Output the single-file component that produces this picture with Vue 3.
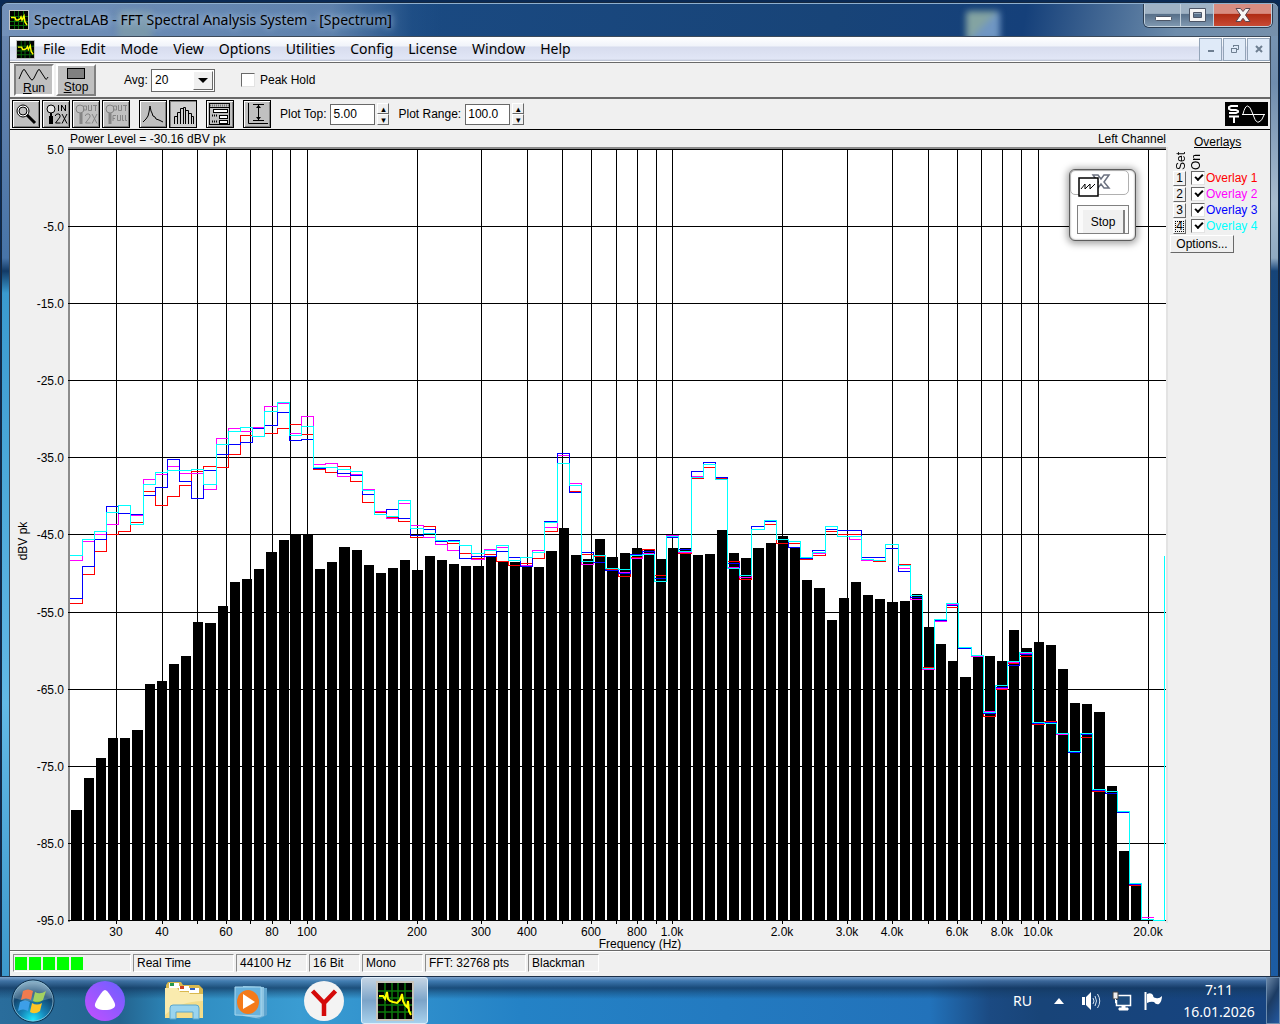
<script setup>
import { ref } from 'vue'

const menus = ['File', 'Edit', 'Mode', 'View', 'Options', 'Utilities', 'Config', 'License', 'Window', 'Help']
const avg = ref('20')
const peakHold = ref(false)
const plotTop = ref('5.00')
const plotRange = ref('100.0')

const levels = [
  810, 778, 758, 738, 738, 730, 684, 681, 664, 656, 622, 623, 606, 582, 579, 569, 552, 540, 534, 534,
  569, 562, 547, 550, 565, 573, 568, 560, 570, 556, 560, 564, 566, 566, 556, 562, 562, 566, 567, 551,
  528, 555, 559, 539, 557, 553, 548, 550, 559, 548, 548, 555, 554, 530, 553, 558, 548, 543, 536, 547,
  580, 588, 620, 598, 582, 595, 599, 602, 601, 594, 627, 644, 661, 677, 656, 656, 661, 630, 648, 642,
  645, 669, 703, 704, 712, 786, 851, 884
]

const overlays = ref([
  {
    name: 'Overlay 1', color: '#ff0000', on: true,
    rows: [603, 574, 551, 534, 531, 522, 491, 505, 496, 485, 471, 466, 467, 454, 435, 428, 433, 428, 424, 434,
      469, 472, 466, 481, 502, 512, 517, 521, 537, 526, 541, 543, 553, 558, 554, 561, 565, 563, 558, 531,
      455, 491, 554, 556, 569, 576, 557, 549, 575, 537, 553, 478, 467, 478, 561, 579, 529, 524, 543, 543,
      559, 555, 531, 534, 534, 560, 561, 544, 564, 595, 667, 619, 607, 647, 655, 716, 689, 663, 656, 724,
      721, 733, 751, 737, 791, 791, 811, 885, 919]
  },
  {
    name: 'Overlay 2', color: '#ff00ff', on: true,
    rows: [560, 541, 534, 524, 505, 515, 479, 474, 466, 473, 473, 489, 438, 428, 431, 427, 406, 403, 433, 416,
      464, 463, 476, 474, 489, 511, 518, 503, 525, 537, 544, 550, 545, 559, 549, 547, 560, 565, 550, 527,
      455, 483, 564, 555, 568, 572, 558, 553, 581, 535, 552, 476, 464, 479, 567, 577, 529, 521, 539, 541,
      558, 553, 529, 536, 539, 560, 560, 544, 568, 599, 669, 621, 604, 647, 656, 711, 688, 662, 653, 723,
      723, 734, 751, 733, 789, 791, 811, 883, 917]
  },
  {
    name: 'Overlay 3', color: '#0000ff', on: true,
    rows: [598, 566, 539, 506, 513, 514, 495, 487, 459, 481, 498, 470, 454, 444, 442, 428, 425, 412, 440, 439,
      468, 467, 473, 475, 494, 514, 509, 518, 535, 529, 541, 540, 558, 556, 556, 551, 557, 566, 552, 521,
      453, 492, 552, 562, 570, 573, 554, 551, 578, 537, 549, 471, 462, 477, 563, 575, 526, 521, 539, 547,
      558, 550, 529, 530, 530, 557, 557, 548, 571, 597, 668, 620, 605, 648, 655, 713, 687, 665, 654, 723,
      722, 733, 752, 734, 790, 793, 812, 884, 919]
  },
  {
    name: 'Overlay 4', color: '#00ffff', on: true,
    rows: [555, 539, 531, 512, 505, 524, 484, 472, 470, 470, 469, 484, 444, 431, 427, 436, 411, 402, 435, 426,
      467, 467, 469, 471, 490, 514, 516, 500, 528, 533, 540, 541, 545, 553, 550, 545, 560, 557, 552, 522,
      463, 485, 561, 555, 568, 569, 555, 554, 581, 536, 551, 477, 464, 479, 568, 575, 529, 520, 539, 541,
      557, 552, 526, 536, 536, 559, 560, 544, 565, 595, 668, 619, 603, 647, 655, 712, 685, 661, 652, 722,
      723, 733, 751, 733, 789, 791, 811, 883, 919]
  }
])

const bandLeft = (i) => Math.ceil(71 + 12.178 * i)
const bars = levels.map((y, i) => ({ x: bandLeft(i), w: bandLeft(i + 1) - 2 - bandLeft(i), y, h: 920 - y }))

function stepPath(o, n) {
  let d = `M70 ${o.rows[0] + 0.5}`
  o.rows.forEach((y, i) => {
    if (i) d += `V${y + 0.5}`
    d += `H${bandLeft(i + 1) - 1.5}`
  })
  if (n === 3) d += 'V920.5H1164.5V556'
  return d
}

const rowsDb = [149, 226, 303, 380, 457, 534, 612, 689, 766, 843, 920].map((y, i) => ({ y, label: (5 - 10 * i).toFixed(1) }))
const columns = [
  [116, '30'], [162, '40'], [197], [226, '60'], [250], [272, '80'], [290], [307, '100'], [417, '200'], [481, '300'],
  [527, '400'], [562], [591, '600'], [616], [637, '800'], [656], [672, '1.0k'], [782, '2.0k'], [847, '3.0k'],
  [892, '4.0k'], [928], [957, '6.0k'], [981], [1002, '8.0k'], [1021], [1038, '10.0k'], [1148, '20.0k']
]
const panes = [
  ['Real Time', 'w100'], ['44100 Hz', 'w70'], ['16 Bit', 'w50'], ['Mono', 'w60'], ['FFT: 32768 pts', 'w100'], ['Blackman', 'w70']
]
</script>

<template>
  <div class="desktop">
    <main class="window">
      <header class="titlebar">
        <svg class="appicon" viewBox="0 0 20 20">
          <rect width="20" height="20" fill="#c8c8c8" /><rect x="1" y="1" width="18" height="18" fill="#000" />
          <path d="M5.500 1V19M9.500 1V19M14.500 1V19M1 6.500H19M1 11.500H19M1 15.500H19" stroke="#0a6a0a" />
          <path d="M2 7.500H6L7 10H9L11 9L12 7L13 10L15 6L16 12L18 15" fill="none" stroke="#ff0" stroke-width="1.500" />
        </svg>
        <h1>SpectraLAB - FFT Spectral Analysis System - [Spectrum]</h1>
        <i class="smudge s1"></i><i class="smudge s2"></i>
        <div class="caption">
          <button class="cap-min" aria-label="Minimize"><svg width="20" height="14"><rect x="2.500" y="8.500" width="16" height="4" rx="1" fill="#fff" stroke="#4c5566" /></svg></button>
          <button class="cap-max" aria-label="Maximize"><svg width="20" height="14"><path d="M2.500 .5H18.500V13.500H2.500ZM6.500 4.500V9.500H14.500V4.500Z" fill="#f4f4f4" fill-rule="evenodd" stroke="#4c5566" /></svg></button>
          <button class="cap-close" aria-label="Close"><svg width="16" height="14" viewBox="0 0 16 14"><path d="M1 .5H5.500L8 3.500L10.500 .5H15L10.500 7L15 13.500H10.500L8 10.300L5.500 13.500H1L5.500 7Z" fill="#f6f6f6" stroke="#5a4650" /></svg></button>
        </div>
      </header>

      <div class="client">
        <nav class="menubar">
          <svg class="appicon small" viewBox="0 0 20 20">
            <rect width="20" height="20" fill="#c8c8c8" /><rect x="1" y="1" width="18" height="18" fill="#000" />
            <path d="M5.500 1V19M9.500 1V19M14.500 1V19M1 6.500H19M1 11.500H19M1 15.500H19" stroke="#0a6a0a" />
            <path d="M2 7.500H6L7 10H9L11 9L12 7L13 10L15 6L16 12L18 15" fill="none" stroke="#ff0" stroke-width="1.500" />
          </svg>
          <button v-for="m in menus" :key="m" class="menu">{{ m }}</button>
          <div class="mdi">
            <button aria-label="Minimize document"><svg width="10" height="10"><rect x="2" y="6" width="6" height="2" fill="#6e7f91" /></svg></button>
            <button aria-label="Restore document"><svg width="10" height="10"><path d="M3.500 3V1.500H8.500V5.500H7M1.500 4.500H6.500V8.500H1.500ZM3 1.500H9M1 4.500H7" fill="none" stroke="#6e7f91" /></svg></button>
            <button aria-label="Close document"><svg width="10" height="10"><path d="M2 2L8 8M8 2L2 8" stroke="#6e7f91" stroke-width="2" /></svg></button>
          </div>
        </nav>

        <div class="toolbar run-bar">
          <button class="big pressed">
            <svg width="32" height="14"><path d="M1 11L4 4Q6 -1 8 4L12 10Q14 14 16 10L19 4Q21 -1 23 4L27 10Q28 13 30 9" fill="none" stroke="#000" /></svg>
            <span><u>R</u>un</span>
          </button>
          <button class="big">
            <svg width="32" height="14"><rect x="7.500" y="1.500" width="17" height="10" fill="#808080" stroke="#000" /></svg>
            <span><u>S</u>top</span>
          </button>
          <label for="avg" class="avg-label">Avg:</label>
          <span class="combo">
            <select id="avg" v-model="avg"><option>20</option><option>10</option></select>
            <i class="drop"></i>
          </span>
          <label class="peak"><input v-model="peakHold" type="checkbox">Peak Hold</label>
        </div>

        <div class="toolbar tool-bar">
          <div class="group">
            <button class="tool" aria-label="Zoom"><svg viewBox="0 0 24 24"><circle cx="9" cy="9" r="6" fill="#fff" stroke="#000" /><circle cx="9" cy="9" r="4" fill="#c0c0c0" stroke="#000" /><path d="M13 13L21 21" stroke="#000" stroke-width="3" /></svg></button>
            <button class="tool" aria-label="Zoom in 2X"><svg viewBox="0 0 24 24"><circle cx="7" cy="7" r="4" fill="#e8e8e8" stroke="#000" /><path d="M7 11V14" stroke="#000" stroke-width="2" /><path d="M7 14V22" stroke="#000" stroke-width="4" /><path d="M14.500 3V9M17.500 9V3L21.500 9V3M11.500 14V13L13 12H15L16 13V15L11.500 21H16.500M18 12L23 21.500M23 12L18 21.500" fill="none" stroke="#000" /></svg></button>
            <button class="tool" aria-label="Zoom out 2X" disabled><svg viewBox="0 0 24 24"><circle cx="6" cy="7" r="4" fill="none" stroke="#858585" /><path d="M7 11V22" stroke="#858585" stroke-width="3" /><path d="M9.500 4V8H12.500V4ZM14.500 3V8.500H17.500V3M19 3.500H23M21.500 3V9M11.500 14V13L13 12H15L16 13V15L11.500 21H16.500M18 12L23 21.500M23 12L18 21.500" fill="none" stroke="#858585" /></svg></button>
            <button class="tool" aria-label="Zoom out full" disabled><svg viewBox="0 0 24 24"><circle cx="6" cy="7" r="4" fill="none" stroke="#858585" /><path d="M6 11V22" stroke="#858585" stroke-width="3" /><path d="M9.500 4V8H12.500V4ZM14.500 3V8.500H17.500V3M19 3.500H23M21.500 3V9M9 19V13.500H12M9 16.500H11M13.500 13V18.500H16.500V13M18.500 13V18.500H20M21.500 13V18.500H23" fill="none" stroke="#858585" /></svg></button>
          </div>
          <div class="group">
            <button class="tool" aria-label="Line plot"><svg viewBox="0 0 24 24"><path d="M2 20L4 18L5 17L7 14L8 10L9 4L10 9L11 11L12 14L14 15L15 17L18 18L22 20" fill="none" stroke="#000" /></svg></button>
            <button class="tool down" aria-label="Bar plot"><svg viewBox="0 0 24 24"><path d="M3.500 22V14.500H6.500V22V10.500H9.500V22V6.500H12.500V22V5.500H14.500V22V8.500H17.500V22V11.500H20.500V22V14.500H22.500V22" fill="none" stroke="#000" /></svg></button>
          </div>
          <div class="group">
            <button class="tool" aria-label="Display settings"><svg viewBox="0 0 24 24"><rect x="1.500" y="1.500" width="20" height="21" fill="#c0c0c0" stroke="#000" /><path d="M2 3.500H21" stroke="#777" stroke-width="2" stroke-dasharray="1 1" /><path d="M2 5.500H21" stroke="#000" /><rect x="5.500" y="7.500" width="14" height="3" fill="#fff" stroke="#000" /><rect x="11.500" y="13.500" width="8" height="3" fill="#fff" stroke="#000" /><rect x="11.500" y="18.500" width="8" height="3" fill="#fff" stroke="#000" /><path d="M4 13.500H9M4 19.500H9" stroke="#000" stroke-width="2" stroke-dasharray="1 1" /></svg></button>
          </div>
          <div class="group">
            <button class="tool" aria-label="Vertical range"><svg viewBox="0 0 24 24"><path d="M3.500 1V21.500H23M8 2.500H19M8 18.500H19M13.500 3V18" fill="none" stroke="#000" /><path d="M11 6L13.500 3L16 6ZM11 15L13.500 18L16 15Z" /></svg></button>
          </div>
          <label for="ptop">Plot Top:</label>
          <input id="ptop" v-model="plotTop" class="num" type="text">
          <span class="spin"><button aria-label="Raise top">▴</button><button aria-label="Lower top">▾</button></span>
          <label for="prange" class="range-label">Plot Range:</label>
          <input id="prange" v-model="plotRange" class="num" type="text">
          <span class="spin"><button aria-label="Raise range">▴</button><button aria-label="Lower range">▾</button></span>
          <svg class="logo" viewBox="0 0 43 24"><rect width="43" height="24" /><path d="M13 4H6L4 5V7L6 8H11L13 9V10L11 11H4M4 14.500H14M9 14V21" fill="none" stroke="#fff" stroke-width="2" /><path d="M17 12.500H40M18 12Q20 4 22.500 4T27 10L29 15Q31 21 34 20T39 13" fill="none" stroke="#fff" /></svg>
        </div>

        <section class="work">
          <div class="plotbox">
            <svg class="plot" viewBox="10 130 1160 820" role="img" aria-label="Spectrum">
              <rect x="69" y="148" width="1097" height="773" fill="#fff" />
              <g shape-rendering="crispEdges">
                <rect x="68" y="147" width="1098" height="2" fill="#8c8c8c" />
                <rect x="68" y="147" width="2" height="775" fill="#8c8c8c" />
                <rect x="1166" y="147" width="2" height="776" fill="#e3e3e3" />
                <rect v-for="r in rowsDb" :key="r.y" x="68" :y="r.y" width="1098" height="1" />
                <rect v-for="c in columns" :key="c[0]" :x="c[0]" y="149" width="1" height="775" />
                <rect v-for="b in bars" :key="b.x" :x="b.x" :y="b.y" :width="b.w" :height="b.h" />
                <template v-for="(o, n) in overlays" :key="o.name">
                  <path v-if="o.on" :d="stepPath(o, n)" fill="none" :stroke="o.color" />
                </template>
              </g>
              <text x="70" y="143">Power Level = -30.16 dBV pk</text>
              <text x="1166" y="143" text-anchor="end">Left Channel</text>
              <text v-for="r in rowsDb" :key="r.label" x="64" :y="r.y + 5" text-anchor="end">{{ r.label }}</text>
              <template v-for="c in columns" :key="c[0]">
                <text v-if="c[1]" :x="c[0]" y="936" text-anchor="middle">{{ c[1] }}</text>
              </template>
              <text x="640" y="948" text-anchor="middle">Frequency (Hz)</text>
              <text transform="translate(27 541) rotate(-90)" text-anchor="middle">dBV pk</text>
            </svg>
            <div class="popup">
              <div class="popup-head">
                <svg width="60" height="28" viewBox="0 0 60 28"><path d="M23 6H28L31 10L34 6H39L34 13L39 19H34L31 15L28 19H23L28 13Z" fill="#fff" stroke="#6c7280" stroke-width="1.500" /><rect x="9" y="9" width="19" height="18" fill="#fff" stroke="#000" stroke-width="1.500" /><path d="M11 20L15 15V20L20 15V20L25 15" fill="none" stroke="#000" /></svg>
              </div>
              <div class="popup-body"><button>Stop</button></div>
            </div>
          </div>

          <aside class="overlays">
            <h2>Overlays</h2>
            <div class="heads"><span>Set</span><span>On</span></div>
            <div v-for="(o, n) in overlays" :key="o.name" class="ov">
              <button class="set" :class="{ focus: n === 3 }">{{ n + 1 }}</button>
              <label :style="{ color: o.color }"><input v-model="o.on" type="checkbox">{{ o.name }}</label>
            </div>
            <button class="options">Options...</button>
          </aside>
        </section>

        <footer class="status">
          <div class="pane meter"><i v-for="n in 5" :key="n"></i></div>
          <div v-for="p in panes" :key="p[0]" class="pane" :class="p[1]">{{ p[0] }}</div>
        </footer>
      </div>
    </main>

    <div class="taskbar">
      <button class="orb" aria-label="Start">
        <svg width="44" height="44" viewBox="0 0 44 44">
          <defs>
            <radialGradient id="orb" cx=".5" cy=".95" r=".9"><stop offset="0" stop-color="#20e8ff" /><stop offset=".35" stop-color="#1684b8" /><stop offset=".7" stop-color="#12456e" /><stop offset="1" stop-color="#6e9cb8" /></radialGradient>
          </defs>
          <circle cx="22" cy="22" r="21" fill="url(#orb)" stroke="#0b2c48" /><circle cx="22" cy="22" r="20" fill="none" stroke="#9cc6dc" stroke-opacity=".7" />
          <path d="M12 12Q17 9 22 12L20 21Q15 18 10 21Z" fill="#ee5a24" /><path d="M24 13Q29 16 35 12L32 21Q27 25 22 22Z" fill="#8cc63a" />
          <path d="M9 23Q14 20 19 23L17 32Q12 29 7 32Z" fill="#3d9fe8" /><path d="M21 24Q26 27 31 24L29 32Q24 36 19 33Z" fill="#fdc526" />
          <path d="M3 19Q6 3 22 3T41 19Q22 26 3 19" fill="#fff" opacity=".2" />
        </svg>
      </button>
      <button class="task alice" aria-label="Alice">
        <svg width="40" height="40" viewBox="0 0 40 40"><defs><linearGradient id="al" x1="0" y1="1" x2="1" y2="0"><stop offset="0" stop-color="#c44fff" /><stop offset="1" stop-color="#6a60ff" /></linearGradient></defs><circle cx="20" cy="20" r="20" fill="url(#al)" /><path d="M20 9C23 9 29 20 30 23C31 27 26 29 20 29S9 27 10 23C11 20 17 9 20 9Z" fill="#fff" /></svg>
      </button>
      <button class="task explorer" aria-label="Explorer">
        <svg width="40" height="40" viewBox="0 0 40 40"><path d="M2 37V4L4 1H17L19 4H35L39 8V37Z" fill="#d9b84e" /><rect x="5" y="2" width="10" height="5" fill="#fff" /><rect x="6" y="2" width="4" height="3" fill="#2a9a4a" /><rect x="15" y="5" width="10" height="5" fill="#fff" /><rect x="16" y="5" width="4" height="3" fill="#d04020" /><rect x="25" y="7" width="10" height="5" fill="#fff" /><rect x="26" y="7" width="5" height="2" fill="#3060c0" /><path d="M1 7H13L16 11H24L26 13H39V37H1Z" fill="#f4dd8a" /><path d="M1 7H13L16 11H24L26 13H39V20Q16 20 1 34Z" fill="#fbefb6" opacity=".8" /><path d="M6 38V27Q6 24 9 24H32Q35 24 35 27V38H29V31H12V38Z" fill="#9ad4ee" stroke="#5aa6cc" /></svg>
      </button>
      <button class="task media" aria-label="Media player">
        <svg width="40" height="40" viewBox="0 0 40 40"><path d="M14 6L36 7V34L28 38L14 35Z" fill="#5fa4ce" /><path d="M12 5L33 6V35L25 37L12 35Z" fill="#8cc4e2" /><path d="M4 6L30 6V35L4 34Z" fill="#68b2dc" stroke="#a8d8f0" /><ellipse cx="17" cy="21" rx="11" ry="12" fill="#f47a1a" /><path d="M12 13L24 21L12 28Z" fill="#fff" /></svg>
      </button>
      <button class="task yandex" aria-label="Yandex">
        <svg width="40" height="40" viewBox="0 0 40 40"><circle cx="20" cy="20" r="20" fill="#f3f3f3" /><path d="M8.500 10L20 22L31.500 10M20 21V35" fill="none" stroke="#d40a0a" stroke-width="4.500" /></svg>
      </button>
      <button class="task active" aria-label="SpectraLAB">
        <svg width="38" height="40" viewBox="0 0 38 40"><rect width="38" height="40" fill="#c8c4bc" /><rect x="2" y="2" width="34" height="36" fill="#000" /><path d="M9 2V38M16 2V38M22 2V38M29 2V38M2 10H36M2 17H36M2 24H36M2 31H36" stroke="#0a780a" stroke-width="1.500" /><path d="M3 15H7L9 18L11 11L12 18L14 20L17 21L21 22L24 19L26 13L27 20L29 24L31 26L32 20L33 30L35 34" fill="none" stroke="#ff0" stroke-width="2" /></svg>
      </button>
      <div class="tray">
        <span class="lang">RU</span>
        <svg class="more" width="10" height="6"><path d="M0 6L5 0L10 6Z" fill="#fff" /></svg>
        <svg class="ti" viewBox="0 0 20 20"><path d="M1 6H4V14H1ZM5 6L10 1V19L5 14Z" fill="#fff" /><path d="M12 7Q14 10 12 13M14 5Q17 10 14 15M16.500 3Q21 10 16.500 17" fill="none" stroke="#d6e4f0" /></svg>
        <svg class="ti" viewBox="0 0 20 20"><path d="M6 4.500H18.500V14.500H4.500V9" fill="#1d4b7c" stroke="#fff" stroke-width="1.500" /><path d="M1 1H6V8H1Z" fill="#eee" stroke="#444" /><path d="M3.500 8V12H5M10 15H13V17H16V19H7V17H10Z" fill="#fff" stroke="#fff" /></svg>
        <svg class="ti" viewBox="0 0 20 20"><path d="M2.500 1V19" stroke="#fff" stroke-width="2" /><path d="M4 3Q8 1 10 4Q10 7 13 7Q16 8 19 5Q19 10 16 13Q13 14 11 11Q8 10 4 12Z" fill="#fff" /></svg>
        <time class="clock"><span>7:11</span><span>16.01.2026</span></time>
      </div>
      <button class="show-desktop" aria-label="Show desktop"></button>
    </div>
  </div>
</template>

<style>
body { margin: 0; }
</style>

<style scoped>
* { box-sizing: border-box; }
button { font: inherit; color: inherit; padding: 0; margin: 0; border: 0; background: none; }
svg { display: block; flex: none; }
.desktop {
  min-height: 100vh; display: flex; flex-direction: column; color: #000;
  font: 12px/16px "Liberation Sans", Arial, sans-serif; background: #0a2a55;
}
.window {
  flex: 1; display: flex; flex-direction: column; margin: 2px 1px 0; padding: 0 7px;
  border: 1px solid #17293f; border-bottom: 0; border-radius: 7px 7px 0 0;
  background:
    linear-gradient(180deg, #6d8ab2 0, #5f80ac 100px, #4774a8 255px, #123a66 268px, #3a9ad0 290px, #62b9e6 700px, #3d98cc 100%) left / 9px 100% no-repeat,
    linear-gradient(180deg, #7c98b4 0, #6f8dae 80px, #a8bccf 200px, #8fa9c2 255px, #164478 268px, #1b5596 600px, #1c5ca4 100%) right / 9px 100% no-repeat,
    #1a4a80;
}
.titlebar {
  position: relative; height: 33px; display: flex; align-items: center; gap: 5px;
  margin: 0 -7px; padding: 0 0 0 7px; border-top: 1px solid #8fb0cf; border-radius: 6px 6px 0 0; overflow: hidden;
  background:
    linear-gradient(90deg, rgba(124, 152, 190, .9) 0, rgba(110, 142, 182, .8) 330px, rgba(40, 88, 142, .3) 410px, transparent 440px),
    linear-gradient(100deg, #1c4f8b 0, #184478 65%, #15407a 80%, #6d8cab 92%, #7690ab 100%);
}
.titlebar h1 {
  margin: 0; font: 14px/20px "Noto Sans", "Open Sans", sans-serif; z-index: 1;
  text-shadow: 0 0 6px #a9c0dc, 0 0 8px #a9c0dc;
}
.appicon { width: 20px; height: 20px; z-index: 1; }
.appicon.small { width: 19px; height: 19px; }
.smudge { position: absolute; top: 7px; width: 34px; height: 30px; filter: blur(3px); border-radius: 3px; opacity: .75; }
.s1 { left: 116px; background: #93ad9f; opacity: .4; }
.s2 { right: 278px; background: linear-gradient(135deg, #a9c5b0 45%, #8fb4dc 55%); }
.caption { position: absolute; right: 6px; top: -1px; height: 24px; display: flex; border: 1px solid #c2d0dc; border-top: 0; border-radius: 0 0 5px 5px; overflow: hidden; box-shadow: 0 0 0 1px #2b3d52; }
.caption button { display: flex; align-items: center; justify-content: center; width: 35px; background: linear-gradient(#9fb2c4 0 45%, #58708a 50%, #7f98b0); }
.caption .cap-max { width: 33px; border-left: 1px solid #c2d0dc; }
.caption .cap-close { width: 58px; border-left: 1px solid #c2d0dc; background: linear-gradient(#d88c80 0 45%, #b02c14 50%, #c84a34); }
.client { flex: 1; display: flex; flex-direction: column; background: #f0f0f0; border: 1px solid #3c4a5a; border-bottom: 0; }
.menubar {
  height: 25px; display: flex; align-items: center; gap: 1px; padding-left: 6px; border-bottom: 1px solid #fff;
  background: linear-gradient(#fff 0, #f0f3fa 9px, #d7dcee 10px, #e1e6f6 22px, #b4bccc 100%);
  font: 14px/20px "Noto Sans", "Open Sans", sans-serif;
}
.menu { padding: 0 7px; }
.mdi { margin-left: auto; display: flex; gap: 1px; height: 23px; }
.mdi button { width: 23px; height: 23px; display: flex; align-items: center; justify-content: center; background: #dfeaf8; border: 1px solid #93a4b8; }
.toolbar { display: flex; align-items: center; border-top: 1px solid #696969; }
.run-bar { height: 35px; padding-left: 4px; }
.tool-bar { height: 33px; padding: 0 2px 0 2px; border-top: 2px solid #696969; border-bottom: 1px solid #000; }
.big { width: 40px; height: 32px; display: flex; flex-direction: column; align-items: center; margin-right: 2px; padding-top: 1px; background: #c0c0c0; border: 2px solid; border-color: #fff #808080 #808080 #fff; line-height: 12px; }
.big.pressed { border-color: #808080 #fff #fff #808080; padding-top: 2px; }
.avg-label { margin-left: 26px; width: 27px; }
.combo { position: relative; width: 64px; height: 23px; }
.combo select { width: 100%; height: 100%; appearance: none; font: inherit; padding: 0 3px; background: #fff; border: 1px solid #696969; border-radius: 0; color: #000; }
.drop { position: absolute; right: 2px; top: 2px; width: 20px; height: 19px; background: #f0f0f0; border: 1px solid; border-color: #fff #696969 #696969 #fff; pointer-events: none; }
.drop::after { content: ""; position: absolute; left: 4px; top: 6px; border: 5px solid transparent; border-top-color: #000; border-bottom: 0; }
input[type="checkbox"] { appearance: none; margin: 0; width: 14px; height: 14px; background: #fff; border: 1px solid; border-color: #696969 #e3e3e3 #e3e3e3 #696969; flex: none; }
.peak { display: flex; align-items: center; gap: 5px; margin-left: 26px; }
.group { display: flex; gap: 2px; margin-right: 9px; }
.tool { width: 28px; height: 28px; background: #c0c0c0; border: 1px solid #000; box-shadow: inset 1px 1px #fff, inset -1px -1px #808080; display: flex; align-items: center; justify-content: center; }
.tool.down { background: #d0d0d0; box-shadow: inset 1px 1px #808080; }
.tool svg { width: 24px; height: 24px; }
.num { width: 45px; height: 21px; font: inherit; padding: 0 2px; border: 1px solid #696969; background: #fff; margin-left: 4px; border-radius: 0; }
.spin { display: flex; flex-direction: column; width: 12px; height: 22px; margin-left: 2px; }
.spin button { height: 11px; font: 9px/8px "DejaVu Sans", sans-serif; border: 1px solid; border-color: #fff #696969 #696969 #fff; }
.range-label { margin-left: 9px; }
.logo { width: 43px; height: 24px; margin-left: auto; }
.work { flex: 1; display: flex; align-items: flex-start; }
.plotbox { position: relative; flex: 1; min-width: 0; }
.plot { width: 100%; height: auto; font-size: 12px; }
.popup { position: absolute; right: 34px; top: 39px; width: 67px; height: 72px; background: #fff; border: 1px solid #5c5c5c; border-radius: 6px; box-shadow: 0 1px 7px 2px rgba(0, 0, 0, .35), inset 0 0 2px #7c7c7c; }
.popup-head { width: 59px; height: 25px; border: 1px solid #b0b0b0; border-radius: 5px; margin-bottom: 10px; }
.popup-head svg { margin: -2px 0 0 -1px; overflow: visible; }
.popup-body { margin-left: 7px; width: 52px; height: 29px; border: 1px solid #808080; padding: 4px 3px 0 5px; background: #fafafa; }
.popup-body button { width: 100%; height: 23px; background: #f0f0f0; border-right: 2px solid #808080; }
.overlays { width: 100px; padding: 4px 0 0 3px; }
.overlays h2 { font: inherit; text-decoration: underline; margin: 0 0 0 21px; }
.heads { display: flex; height: 20px; padding-left: 1px; }
.heads span { writing-mode: vertical-rl; transform: rotate(180deg); width: 15px; line-height: 15px; white-space: nowrap; margin-top: -2px; }
.ov { display: flex; height: 16px; align-items: center; gap: 5px; }
.set { width: 13px; height: 15px; line-height: 12px; border: 1px solid; border-color: #fff #696969 #696969 #fff; }
.set.focus { outline: 1px dotted #000; outline-offset: -3px; }
.ov label { display: flex; align-items: center; gap: 1px; white-space: nowrap; }
.ov input { position: relative; }
.ov input:checked::after { content: ""; position: absolute; left: 3px; top: 2px; width: 6px; height: 3px; border-left: 2px solid #000; border-bottom: 2px solid #000; transform: rotate(-45deg); }
.options { width: 64px; height: 18px; margin: 1px 0 0 -3px; border: 1px solid; border-color: #fff #696969 #696969 #fff; line-height: 15px; }
.status { height: 26px; display: flex; gap: 2px; align-items: flex-start; border-top: 1px solid #696969; box-shadow: inset 0 1px #fff; padding: 3px 3px 0; }
.pane { height: 18px; padding-left: 3px; border: 1px solid; border-color: #8c8c8c #fff #fff #8c8c8c; white-space: nowrap; }
.meter { width: 118px; display: flex; gap: 2px; padding: 2px 0 0 1px; }
.meter i { width: 12px; height: 13px; background: #0f0; }
.w100 { width: 101px; }
.w70 { width: 71px; }
.w60 { width: 61px; }
.w50 { width: 51px; }
.taskbar {
  height: 48px; display: flex; align-items: center; padding-left: 11px; border-top: 1px solid #1c2f48; color: #fff;
  background:
    linear-gradient(#7fa3cc 0, rgba(72, 116, 166, .7) 4px, rgba(20, 56, 96, .75) 11px, rgba(20, 60, 100, .4) 16px, transparent 22px),
    linear-gradient(55deg, transparent 1022px, transparent 0),
    linear-gradient(90deg, #2a6d9c 0, #23648f 120px, #2f8cc0 180px, #3a9cd2 300px, #2482c6 520px, #2272ba 930px, #1b4a82 990px, #184478 1040px, #164482 100%);
}
.orb { width: 44px; margin-right: 30px; }
.task { width: 40px; display: flex; justify-content: center; }
.alice { margin-right: 39px; }
.explorer { margin-right: 27px; }
.media { margin-right: 33px; }
.yandex { margin-right: 17px; }
.task.active { width: 67px; height: 47px; align-items: center; border: 1px solid #dfeefa; border-radius: 3px; background: linear-gradient(#c4d4e4, #7ca4c8 50%, #a6d0ec); }
.tray { margin-left: auto; display: flex; align-items: center; gap: 11px; font: 14px/20px "Noto Sans", "Open Sans", sans-serif; }
.lang { margin-right: 11px; }
.tray .ti { width: 20px; height: 20px; }
.more { margin-right: 6px; }
.clock { display: flex; flex-direction: column; align-items: center; width: 90px; line-height: 22px; }
.show-desktop { width: 14px; height: 47px; margin-left: 2px; border: 1px solid #6c8cae; background: linear-gradient(120deg, #6a86a6, #1c3c64 45%, #2358a0); }
</style>
